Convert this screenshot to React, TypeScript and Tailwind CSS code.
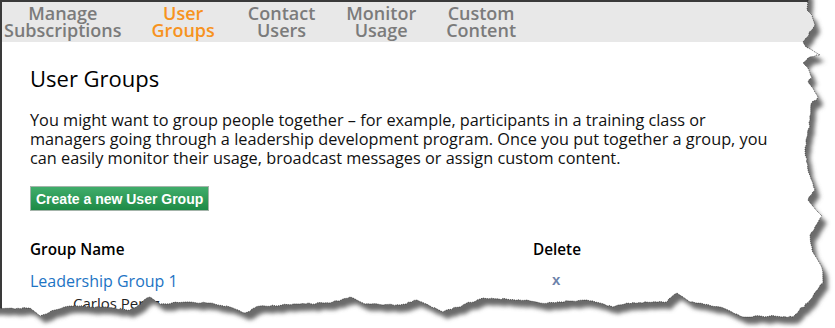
import React from 'react';

const navItems = [
  { a: 'Manage', b: 'Subscriptions', cls: 'ml-[2px]' },
  { a: 'User', b: 'Groups', cls: 'ml-[30px]' },
  { a: 'Contact', b: 'Users', cls: 'ml-[33px]' },
  { a: 'Monitor', b: 'Usage', cls: 'ml-[31px]' },
  { a: 'Custom', b: 'Content', cls: 'ml-[30px]' },
];

// key points of the torn paper outline (clockwise from top left)
const keyPts: [number, number][] = [
  [808, 0], [807, 10], [812, 15], [815, 25], [812, 30], [806, 38], [803, 42], [806, 47],
  [812, 50], [820, 55], [808, 58], [803, 63], [808, 68], [812, 78], [808, 82], [814, 90],
  [818, 97], [811, 104], [810, 120], [805, 150], [808, 170], [815, 190], [808, 200],
  [816, 210], [822, 216], [810, 235], [812, 250], [822, 268], [823, 283], [810, 300],
  [793, 317], [770, 316], [743, 317], [720, 307], [690, 302], [677, 293], [667, 302],
  [627, 303], [613, 307], [587, 300], [540, 303], [527, 300], [483, 298], [443, 312],
  [417, 300], [400, 305], [365, 304], [350, 297], [330, 303], [300, 304], [260, 306],
  [245, 313], [230, 307], [210, 303], [185, 302], [160, 304], [150, 297], [130, 310],
  [100, 307], [70, 306], [55, 310], [40, 316], [30, 308], [15, 309], [0, 308],
];

function tornPath() {
  const out: string[] = ['M -10 -10', 'L 808 -10'];
  let seed = 7;
  const rnd = () => {
    seed = (seed * 9301 + 49297) % 233280;
    return seed / 233280 - 0.5;
  };
  for (let i = 0; i < keyPts.length - 1; i++) {
    const [x1, y1] = keyPts[i];
    const [x2, y2] = keyPts[i + 1];
    const len = Math.hypot(x2 - x1, y2 - y1);
    const steps = Math.max(1, Math.round(len / 3));
    for (let s = 0; s < steps; s++) {
      const t = s / steps;
      const j = s === 0 ? 0 : rnd() * 1.6;
      out.push(`L ${(x1 + (x2 - x1) * t + j).toFixed(1)} ${(y1 + (y2 - y1) * t + j).toFixed(1)}`);
    }
  }
  out.push('L 0 308', 'L -10 308', 'Z');
  return out.join(' ');
}

const TornEdge: React.FC = () => {
  const d = tornPath();
  return (
    <svg className="absolute inset-0 pointer-events-none" width="835" height="328" viewBox="0 0 835 328">
      <defs>
        <filter id="blur" x="-5%" y="-5%" width="110%" height="110%">
          <feGaussianBlur stdDeviation="2.2" />
        </filter>
        <mask id="outside">
          <rect x="0" y="0" width="835" height="328" fill="white" />
          <path d={d} fill="black" />
        </mask>
      </defs>
      <g mask="url(#outside)">
        <rect x="0" y="0" width="835" height="328" fill="white" />
        <path d={d} transform="translate(5 7)" fill="#6a6a6a" filter="url(#blur)" />
      </g>
      <path d={d} fill="none" stroke="#222" strokeWidth="0.7" strokeDasharray="1 1" />
    </svg>
  );
};

export default function App() {
  return (
    <div className="relative w-[835px] h-[328px] overflow-hidden bg-white font-['Open_Sans',sans-serif]">
      <div className="h-full border-t-2 border-l-2 border-[#3a3a3a]">
        {/* Tabs */}
        <nav className="flex items-center h-[40px] bg-[#e8e8e8]">
          {navItems.map((n, i) => (
            <div
              key={n.a}
              className={`${n.cls} text-center font-semibold text-[18px] leading-[17px] ${
                i === 1 ? 'text-[#f7931e]' : 'text-[#7b7b7b]'
              }`}
            >
              {n.a}
              <br />
              {n.b}
            </div>
          ))}
        </nav>

        <div className="pl-[28px]">
          <h1 className="mt-[22px] text-[22px] leading-[28px] text-black">User Groups</h1>
          <p className="mt-[19px] w-[775px] text-[16.3px] leading-[19px] text-[#111]">
            You might want to group people together – for example, participants in a training class or
            <br />
            managers going through a leadership development program. Once you put together a group, you
            <br />
            can easily monitor their usage, broadcast messages or assign custom content.
          </p>
          <button className="mt-[18px] h-[25px] px-[5px] border border-[#a4b4aa] bg-gradient-to-b from-[#40ad6b] to-[#1d8a46] text-white font-bold text-[14px] font-['Liberation_Sans',sans-serif] leading-[22px]">
            Create a new User Group
          </button>

          {/* Groups table */}
          <div className="mt-[28px] grid grid-cols-[503px_80px] text-[15.3px]">
            <div className="font-semibold text-black leading-[20px]">Group Name</div>
            <div className="font-semibold text-black leading-[20px]">Delete</div>
            <div className="mt-[12px] text-[16px] text-[#1d74c4] leading-[20px]">Leadership Group 1</div>
            <div className="mt-[11px] pl-[19px] text-[#6d82aa] font-bold text-[15px] leading-[20px] font-['Liberation_Sans',sans-serif]">
              x
            </div>
            <div className="pl-[43px] mt-[2px] text-[15px] leading-[20px] text-[#222]">Carlos Perez</div>
          </div>
        </div>
      </div>
      <TornEdge />
    </div>
  );
}
